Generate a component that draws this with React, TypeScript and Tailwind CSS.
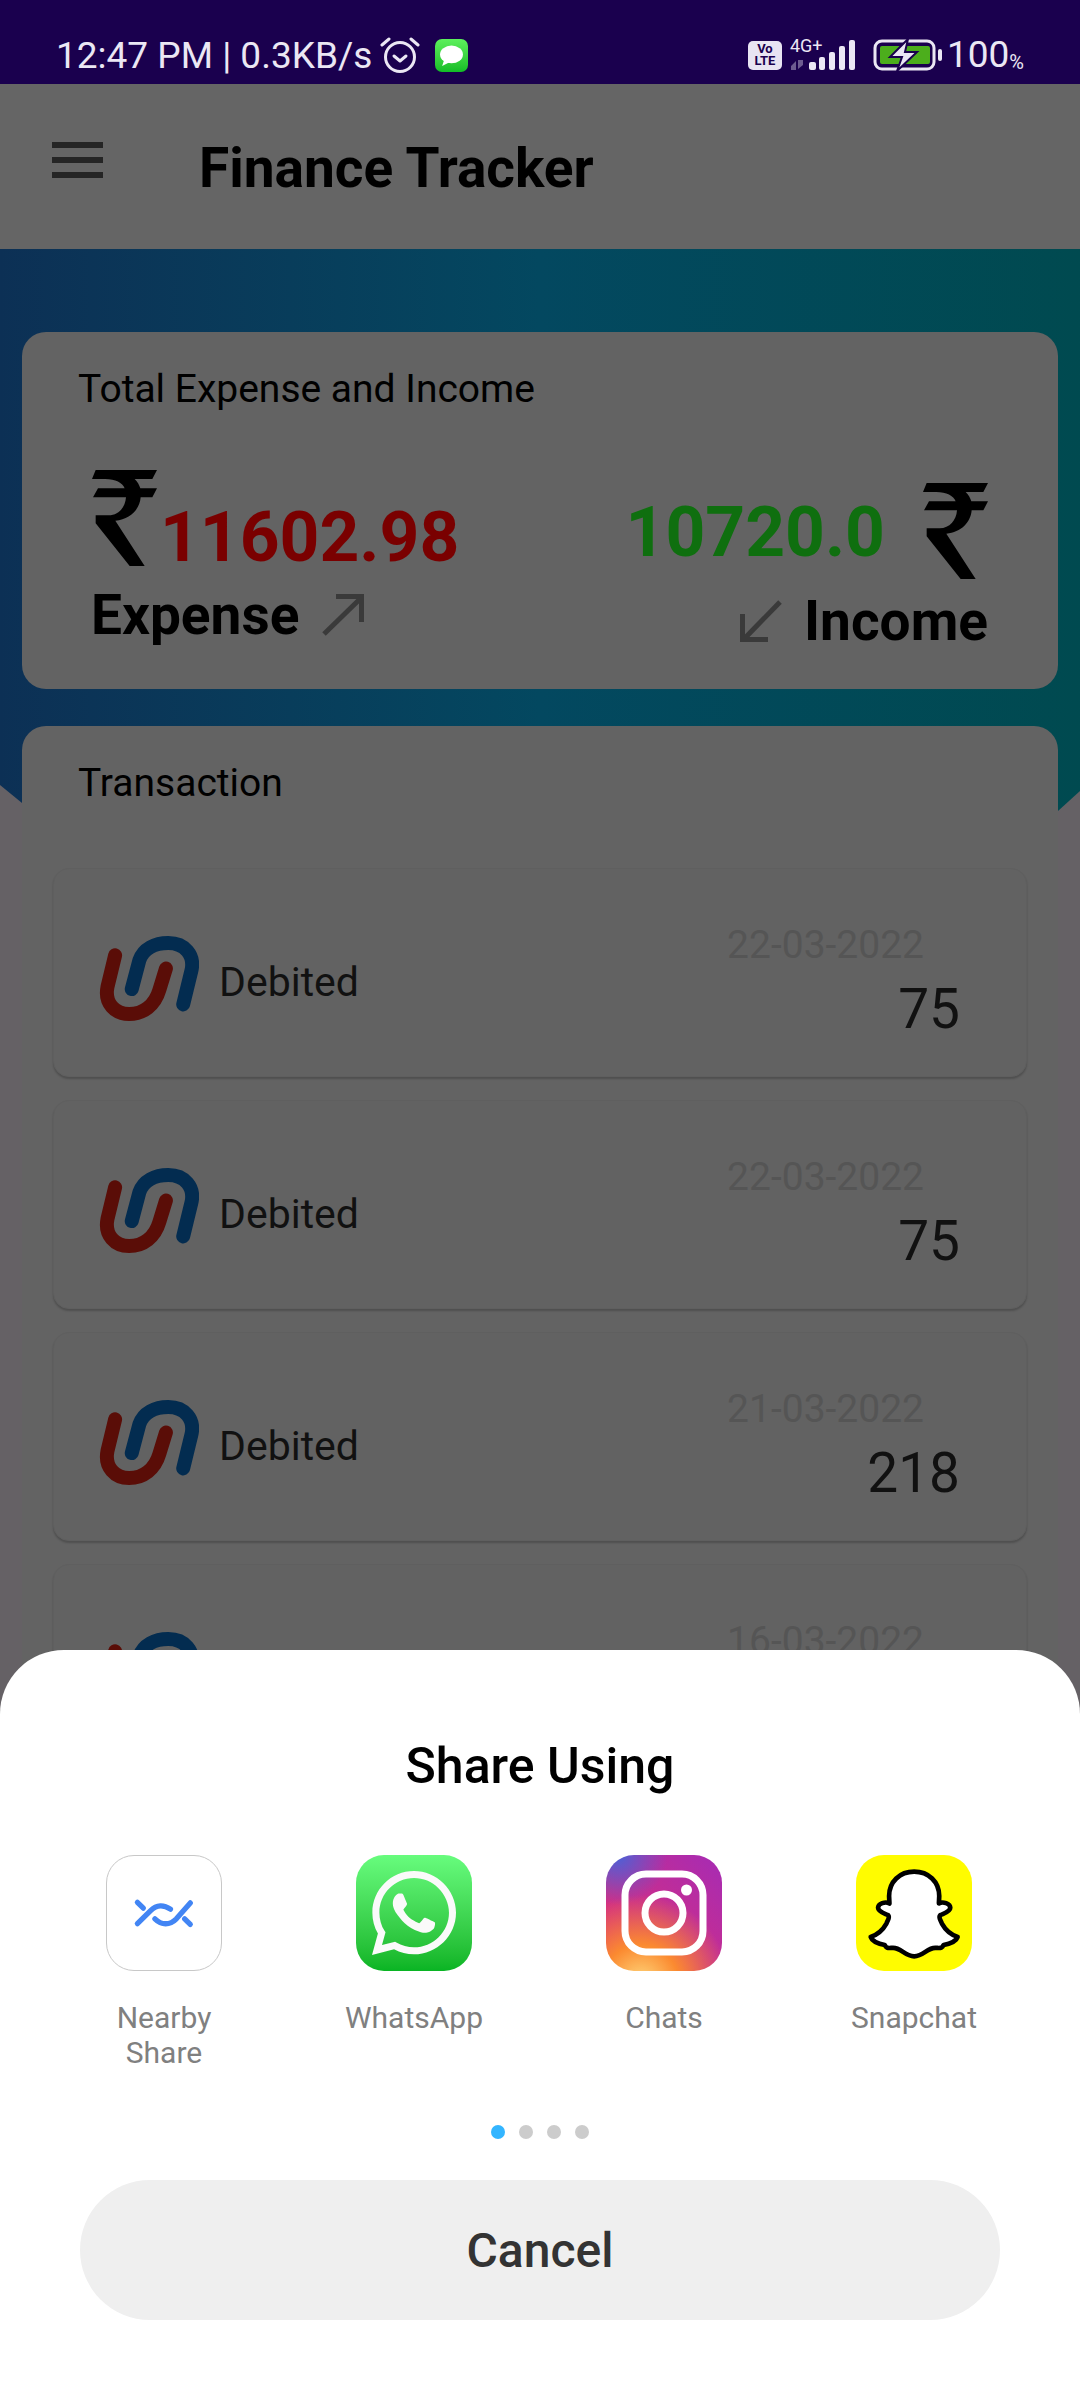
import React from 'react';
import { FaWhatsapp } from 'react-icons/fa';

const rows = [
  { date: '22-03-2022', amount: '75' },
  { date: '22-03-2022', amount: '75' },
  { date: '21-03-2022', amount: '218' },
  { date: '16-03-2022', amount: '' },
];

const RupeeIcon = ({ className }: { className?: string }) => (
  <svg viewBox="0 0 195 288" className={className} fill="#000">
    <path d="M11 0H195L181 27H128C137 36 142 45 145 55H195L181 82H146C143 118 115 148 70 152L158 288H113L11 160V136H50C80 136 100 112 102 82H3L18 55H98C92 38 70 27 40 27H0Z" />
  </svg>
);

const UnionLogo = () => (
  <svg viewBox="207 257 300 256" className="w-[100px] h-[85px] mt-[12px] shrink-0" fill="none" strokeWidth="42" strokeLinecap="round">
    <path stroke="#5a0d07" d="M255 315L232 410C222 460 255 492 297 492C340 492 375 465 388 420L408 355" />
    <path stroke="#032c50" d="M305 417L328 330C340 295 375 278 415 278C465 278 495 315 485 360L460 463" />
  </svg>
);

const NearbyIcon = () => (
  <div className="w-[116px] h-[116px] rounded-[28px] border border-[#c8c8c8] bg-white">
    <svg viewBox="140 105 345 345" className="w-full h-full" fill="none" stroke="#4285f4" strokeWidth="16" strokeLinecap="round">
      <path d="M232 310L272 270C290 252 312 252 332 266" />
      <path d="M285 295C305 315 330 315 350 295L392 247" />
      <path d="M232 245L250 263" />
      <path d="M375 295L392 312" />
    </svg>
  </div>
);

const WhatsappIcon = () => (
  <div className="w-[116px] h-[116px] rounded-[28px] bg-gradient-to-b from-[#67fc7d] to-[#08b423] flex items-center justify-center">
    <FaWhatsapp size={96} color="#fafafa" />
  </div>
);

const InstagramIcon = () => (
  <div className="w-[116px] h-[116px] rounded-[28px] bg-[radial-gradient(circle_at_10%_0%,#4a62d8_0%,transparent_32%),radial-gradient(circle_at_30%_110%,#ffd97d_0%,#fb8a30_25%,transparent_58%),linear-gradient(45deg,#e6306f,#a52bb5)]">
    <svg viewBox="0 0 116 116" className="w-full h-full" fill="none" stroke="#fff">
      <rect x="19" y="19" width="78" height="78" rx="21" strokeWidth="7" />
      <circle cx="58" cy="58" r="19" strokeWidth="7" />
      <circle cx="80.5" cy="35" r="5.5" fill="#fff" stroke="none" />
    </svg>
  </div>
);

const SnapchatIcon = () => (
  <div className="w-[116px] h-[116px] rounded-[28px] bg-[#fffc00]">
    <svg viewBox="888 105 347 347" className="w-full h-full" fill="#fff" stroke="#000" strokeWidth="14" strokeLinejoin="round">
      <path d="M1062 155C1105 155 1137 185 1137 228L1136 250C1148 243 1170 250 1170 263C1170 275 1150 280 1140 285C1135 290 1140 300 1145 310C1155 328 1172 343 1192 350C1188 362 1170 370 1150 374C1145 385 1142 383 1125 383C1100 383 1090 408 1062 408C1034 408 1024 383 999 383C982 383 979 385 974 374C954 370 936 362 932 350C952 343 969 328 979 310C984 300 989 290 984 285C974 280 954 275 954 263C954 250 976 243 988 250L987 228C987 185 1019 155 1062 155Z" />
    </svg>
  </div>
);

const shareApps = [
  { label: 'Nearby Share', icon: <NearbyIcon /> },
  { label: 'WhatsApp', icon: <WhatsappIcon /> },
  { label: 'Chats', icon: <InstagramIcon /> },
  { label: 'Snapchat', icon: <SnapchatIcon /> },
];

const StatusBar = () => (
  <div className="h-[84px] shrink-0 bg-[#1a004e] pt-[26px] pl-[56px] pr-[56px] flex items-center justify-between text-[#ebe7f4]">
    <div className="flex items-center">
      <span className="mt-[2px] text-[37px] leading-[58px]">12:47 PM | 0.3KB/s</span>
      <svg viewBox="0 0 40 38" className="w-[40px] h-[38px] ml-[8px]" fill="none" stroke="#ebe7f4" strokeLinecap="round">
        <circle cx="20" cy="21" r="14.5" strokeWidth="3" />
        <path d="M14 20L20 25L26 20" strokeWidth="3" strokeLinejoin="round" />
        <path d="M2 9L9 3M38 9L31 3" strokeWidth="3" />
      </svg>
      <div className="w-[33px] h-[33px] ml-[15px] rounded-[7px] bg-gradient-to-b from-[#5cf05c] to-[#10bd26] flex items-center justify-center">
        <svg viewBox="0 0 24 22" className="w-[25px] h-[23px]" fill="#fff">
          <ellipse cx="12" cy="10" rx="11" ry="8.5" />
          <path d="M5 15L3 21L11 17Z" />
        </svg>
      </div>
    </div>
    <div className="flex items-center">
      <div className="w-[34px] h-[29px] rounded-[5px] bg-[#e8e4f2] flex flex-col items-center justify-center text-[#1a004e] text-[13px] leading-[12px] font-bold">
        <span>Vo</span>
        <span>LTE</span>
      </div>
      <div className="relative w-[70px] h-[32px] ml-[8px]">
        <span className="absolute left-0 -top-[3px] text-[18px] leading-[20px]">4G+</span>
        <svg viewBox="0 0 70 32" className="absolute inset-0 w-full h-full" fill="#ebe7f4">
          <path d="M1 27L6 22V31H1ZM8 21V30L13 26V21Z" opacity="0.4" />
          <rect x="19" y="23" width="7" height="8" rx="2" />
          <rect x="29" y="18" width="6" height="13" rx="2" />
          <rect x="39" y="13" width="6" height="18" rx="2" />
          <rect x="49" y="7" width="6" height="24" rx="2" />
          <rect x="59" y="1" width="6" height="30" rx="2" />
        </svg>
      </div>
      <svg viewBox="0 0 70 32" className="w-[70px] h-[32px] ml-[13px]">
        <rect x="2" y="2" width="59" height="28" rx="7" fill="none" stroke="#ebe7f4" strokeWidth="3" />
        <rect x="7" y="7" width="50" height="18" rx="2" fill="#4cae1c" />
        <rect x="65" y="10" width="4" height="12" rx="2" fill="#ebe7f4" />
        <path d="M35 0L17 18H29L24 32L44 13H32Z" fill="#ebe7f4" stroke="#1a004e" strokeWidth="2" />
      </svg>
      <span className="text-[37px] leading-[58px] ml-[4px]">100</span>
      <span className="text-[20px] leading-[20px] mt-[14px]">%</span>
    </div>
  </div>
);

const TopBar = () => (
  <div className="h-[165px] shrink-0 bg-[#656565] flex items-center pl-[52px]">
    <div className="w-[51px] flex flex-col gap-[9px] mb-[13px]">
      <div className="h-[6px] bg-[#252525]" />
      <div className="h-[6px] bg-[#252525]" />
      <div className="h-[6px] bg-[#252525]" />
    </div>
    <h1 className="ml-[96px] mt-[3px] text-[55px] leading-[60px] font-bold text-black">Finance Tracker</h1>
  </div>
);

const TotalsCard = () => (
  <div className="h-[357px] shrink-0 rounded-[24px] bg-[#636363] pt-[34px] px-[70px] text-black">
    <p className="-ml-[14px] mt-[1px] text-[39px] leading-[44px]">Total Expense and Income</p>
    <div className="mt-[59px] flex justify-between">
      <div>
        <div className="flex items-end">
          <RupeeIcon className="w-[65px] h-[96px]" />
          <span className="ml-[3px] text-[69.5px] leading-[57px] font-bold text-[#7a0000]">11602.98</span>
        </div>
        <div className="mt-[19px] -ml-[1px] flex items-center">
          <span className="text-[55px] leading-[60px] font-bold">Expense</span>
          <svg viewBox="0 0 42 42" className="w-[42px] h-[42px] ml-[23px]" fill="none" stroke="#3a3a3a" strokeWidth="5">
            <path d="M2 40L39 4" />
            <path d="M14 2.5H39.5V28" />
          </svg>
        </div>
      </div>
      <div className="mt-[13px] flex flex-col items-end">
        <div className="flex items-start">
          <span className="mt-[21px] mr-[38px] text-[69.5px] leading-[57px] font-bold text-[#0f6f0f]">10720.0</span>
          <RupeeIcon className="w-[65px] h-[96px]" />
        </div>
        <div className="mt-[12px] flex items-center">
          <svg viewBox="0 0 42 42" className="w-[42px] h-[42px] mr-[22px]" fill="none" stroke="#3a3a3a" strokeWidth="5">
            <path d="M40 2L4 39" />
            <path d="M2.5 14V39.5H28" />
          </svg>
          <span className="text-[55px] leading-[60px] font-bold">Income</span>
        </div>
      </div>
    </div>
  </div>
);

const TransactionRow = ({ date, amount }: { date: string; amount: string }) => (
  <div className="h-[209px] shrink-0 rounded-[16px] border border-[#5f5f5f] bg-[#626262] shadow-[0_2px_2px_rgba(0,0,0,0.2)] flex items-start justify-between pl-[45px] pr-[66px]">
    <div className="h-full flex items-center">
      <UnionLogo />
      <span className="ml-[20px] mt-[18px] text-[41px] leading-[46px] text-[#111]">Debited</span>
    </div>
    <div className="pt-[54px] flex flex-col items-end">
      <span className="mr-[36px] text-[39px] leading-[44px] text-[#555555]">{date}</span>
      <span className="mt-[12px] text-[55px] leading-[60px] text-[#111]">{amount}</span>
    </div>
  </div>
);

const ShareSheet = () => (
  <div className="absolute left-0 right-0 bottom-0 h-[750px] rounded-t-[64px] bg-white pt-[86px]">
    <h2 className="text-center text-[50px] leading-[60px] font-medium text-black">Share Using</h2>
    <div className="mt-[59px] grid grid-cols-4 pl-[39px] pr-[41px]">
      {shareApps.map((app) => (
        <div key={app.label} className="flex flex-col items-center">
          {app.icon}
          <p className="mt-[29px] w-[150px] text-center text-[30px] leading-[35px] text-[#808080]">{app.label}</p>
        </div>
      ))}
    </div>
    <div className="absolute top-[475px] left-0 right-0 flex justify-center gap-[14px]">
      <div className="w-[14px] h-[14px] rounded-full bg-[#33b5ff]" />
      <div className="w-[14px] h-[14px] rounded-full bg-[#cccccc]" />
      <div className="w-[14px] h-[14px] rounded-full bg-[#cccccc]" />
      <div className="w-[14px] h-[14px] rounded-full bg-[#cccccc]" />
    </div>
    <button className="absolute top-[530px] left-[80px] w-[920px] h-[140px] rounded-full bg-[#efefef] pt-[2px] text-[48px] font-medium text-[#333]">
      Cancel
    </button>
  </div>
);

export default function App() {
  return (
    <div className="relative w-[1080px] h-[2400px] overflow-hidden flex flex-col bg-[#656165] font-['Roboto',sans-serif]">
      <StatusBar />
      <TopBar />
      <div className="relative flex-1 min-h-0 flex flex-col gap-[37px] px-[22px] pt-[83px]">
        <div className="absolute inset-x-0 top-0 h-[700px] bg-gradient-to-r from-[#0c3055] via-[#034860] to-[#004a50] [clip-path:polygon(0_0,100%_0,100%_542px,1058px_562px,50%_700px,22px_554px,0_536px)]" />
        <div className="relative flex flex-col gap-[37px] flex-1 min-h-0">
          <TotalsCard />
          <div className="flex-1 rounded-t-[24px] bg-[#636363] pt-[35px] px-[31px]">
            <p className="ml-[25px] text-[39px] leading-[44px] text-black">Transaction</p>
            <div className="mt-[63px] flex flex-col gap-[23px]">
              {rows.map((row, i) => (
                <TransactionRow key={i} date={row.date} amount={row.amount} />
              ))}
            </div>
          </div>
        </div>
      </div>
      <ShareSheet />
    </div>
  );
}
